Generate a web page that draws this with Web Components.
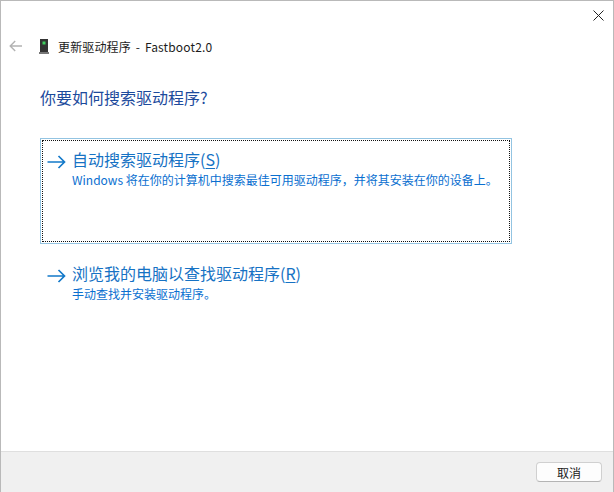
<!DOCTYPE html>
<html lang="zh-CN">
<head>
<meta charset="utf-8">
<title>更新驱动程序</title>
<style>
  html, body { margin: 0; padding: 0; background: #fff; }
  body { font-family: "Noto Sans CJK SC", "Liberation Sans", sans-serif; }
</style>
</head>
<body>
<wizard-window>
  <wizard-header>更新驱动程序 - Fastboot2.0</wizard-header>
  <h-title>你要如何搜索驱动程序?</h-title>
  <command-link focused accel="S" label="自动搜索驱动程序" desc="Windows 将在你的计算机中搜索最佳可用驱动程序&#xFF0C;并将其安装在你的设备上。"></command-link>
  <command-link accel="R" label="浏览我的电脑以查找驱动程序" desc="手动查找并安装驱动程序。"></command-link>
</wizard-window>
<script>
class WizardWindow extends HTMLElement {
  constructor() {
    super();
    this.attachShadow({ mode: 'open' });
    this.shadowRoot.innerHTML = `
      <style>
        :host {
          display: flex;
          flex-direction: column;
          width: 614px;
          height: 492px;
          box-sizing: border-box;
          border: 1px solid #b9b9b9;
          border-bottom: 0;
          background: #fff;
          overflow: hidden;
        }
        .titlebar {
          display: flex;
          justify-content: flex-end;
          height: 28px;
          flex: none;
        }
        .close {
          width: 30px;
          height: 28px;
          display: flex;
          align-items: center;
          justify-content: center;
        }
        .main { flex: 1; display: flex; flex-direction: column; }
        .footer {
          flex: none;
          height: 41px;
          box-sizing: border-box;
          background: #f0f0f0;
          border-top: 1px solid #dfdfdf;
          display: flex;
          align-items: center;
          justify-content: flex-end;
          padding-right: 11px;
        }
        button {
          width: 66px;
          height: 20px;
          padding: 0;
          box-sizing: border-box;
          background: #fdfdfd;
          border: 1px solid #d0d0d0;
          border-bottom-color: #b4b4b4;
          border-radius: 4px;
          font: 12px "Noto Sans CJK SC", "Liberation Sans", sans-serif;
          color: #1a1a1a;
        }
      </style>
      <div class="titlebar">
        <div class="close">
          <svg width="11" height="11" viewBox="0 0 11 11"><path d="M0.5 0.5L10.5 10.5M10.5 0.5L0.5 10.5" stroke="#222" stroke-width="1" fill="none"/></svg>
        </div>
      </div>
      <div class="main"><slot></slot></div>
      <div class="footer"><button>取消</button></div>
    `;
  }
}

class WizardHeader extends HTMLElement {
  constructor() {
    super();
    this.attachShadow({ mode: 'open' });
    this.shadowRoot.innerHTML = `
      <style>
        :host {
          display: flex;
          align-items: center;
          height: 34px;
          padding-left: 8px;
          font: 12px "Noto Sans CJK SC", "Noto Sans", sans-serif;
          word-spacing: 2px;
          letter-spacing: 0.15px;
          color: #1c1c1c;
        }
        .back { width: 14px; height: 12px; margin-right: 16px; flex: none; }
        .dev { width: 10px; height: 15px; margin-right: 9px; flex: none; }
      </style>
      <svg class="back" viewBox="0 0 14 12"><path d="M13 6H1.2M6.2 1L1.2 6L6.2 11" stroke="#b3b3b3" stroke-width="1.4" fill="none"/></svg>
      <svg class="dev" viewBox="0 0 10 15">
        <rect x="1" y="0" width="8" height="13" fill="#333"/>
        <rect x="0" y="13" width="10" height="2" fill="#777"/>
        <rect x="3.5" y="2.5" width="3" height="3" fill="#3fcf5f"/>
      </svg>
      <span><slot></slot></span>
    `;
  }
}

class HTitle extends HTMLElement {
  constructor() {
    super();
    this.attachShadow({ mode: 'open' });
    this.shadowRoot.innerHTML = `
      <style>
        :host {
          display: block;
          margin: 23px 0 30px 39px;
          font: 16px/22px "Noto Sans CJK SC", "Liberation Sans", sans-serif;
          color: #1c4a9c;
        }
      </style>
      <slot></slot>
    `;
  }
}

class CommandLink extends HTMLElement {
  constructor() {
    super();
    this.attachShadow({ mode: 'open' });
    const accel = this.getAttribute('accel');
    this.shadowRoot.innerHTML = `
      <style>
        :host {
          display: block;
          box-sizing: border-box;
          width: 472px;
          margin-left: 39px;
          font-family: "Noto Sans CJK SC", "Liberation Sans", sans-serif;
        }
        :host([focused]) {
          height: 106px;
          border: 1px solid #93c4e2;
          padding: 1px;
          margin-bottom: 10px;
        }
        .inner {
          display: flex;
          box-sizing: border-box;
          height: 100%;
          padding: 7px 0 0 4px;
          border: 1px solid transparent;
        }
        :host([focused]) .inner { border: 1px dotted #111; }
        :host(:not([focused])) .inner { padding: 7px 0 0 6px; }
        .arrow { width: 19px; height: 14px; margin: 7px 6px 0 0; flex: none; }
        .label { font-size: 16px; line-height: 23px; color: #1672c4; }
        .desc { font-size: 12px; line-height: 18px; color: #0a6fd0; white-space: nowrap; }
        u { text-underline-offset: 2px; }
      </style>
      <svg class="arrow" viewBox="0 0 19 14"><path d="M0.5 7H17.5M11.5 1L17.5 7L11.5 13" stroke="#1379c9" stroke-width="1.7" fill="none"/></svg>
      <div>
        <div class="label">${this.getAttribute('label')}(<u>${accel}</u>)</div>
        <div class="desc">${this.getAttribute('desc')}</div>
      </div>
    `;
    const wrap = document.createElement('div');
    wrap.className = 'inner';
    const nodes = [...this.shadowRoot.childNodes].filter(n => n.nodeName !== 'STYLE');
    nodes.forEach(n => wrap.appendChild(n));
    this.shadowRoot.appendChild(wrap);
  }
}

customElements.define('wizard-window', WizardWindow);
customElements.define('wizard-header', WizardHeader);
customElements.define('h-title', HTitle);
customElements.define('command-link', CommandLink);
</script>
</body>
</html>
